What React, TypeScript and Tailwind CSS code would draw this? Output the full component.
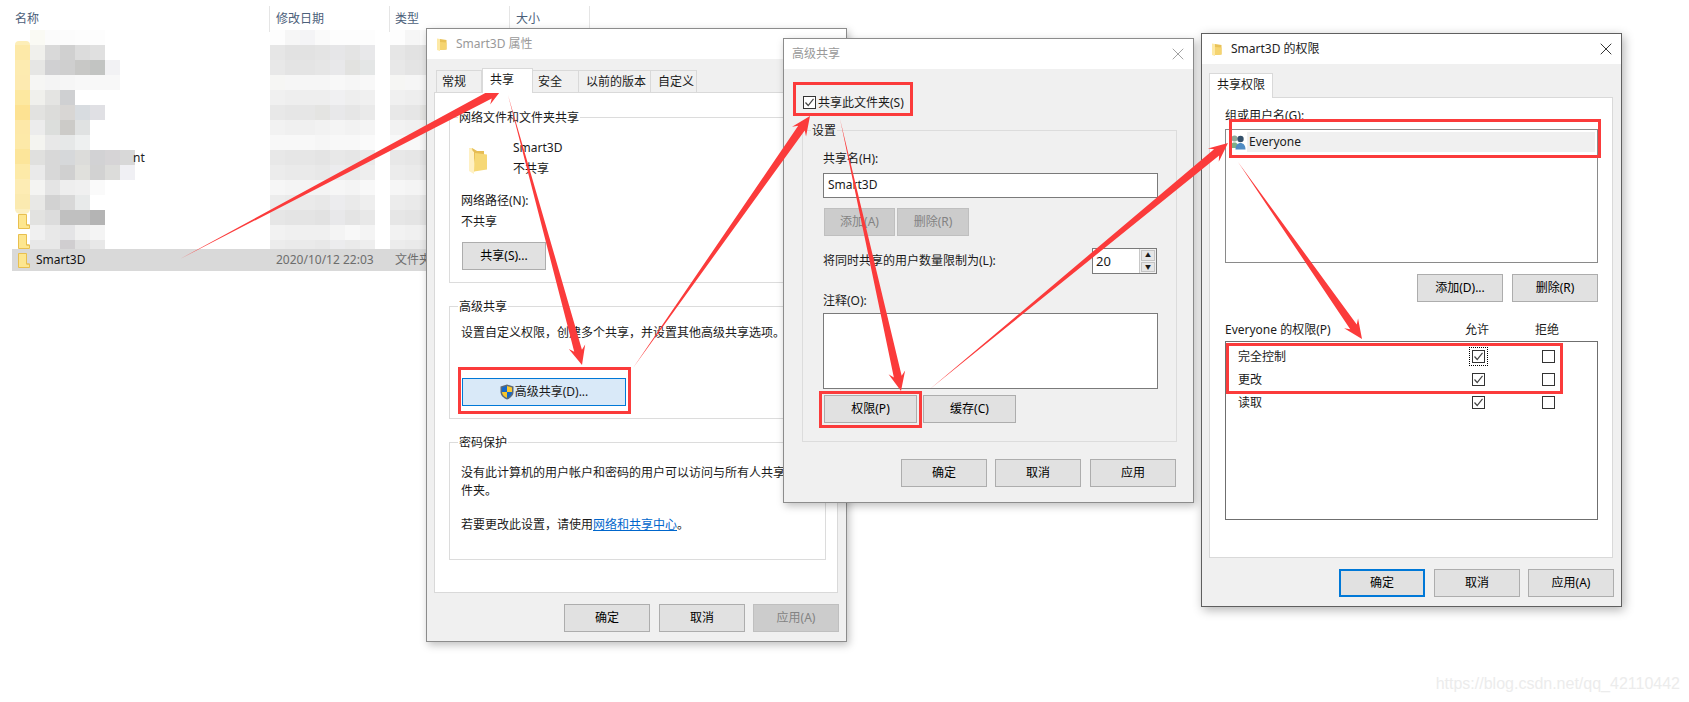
import React from 'react';
import { X } from 'lucide-react';

// mosaic cell colours, one row per 15px (blurred file list behind the dialogs)
const nameRows = [
  ['#fafaf4', '#fbfbfb', '#fcfcfc', '#fdfdfd', '#fdfdfd'],
  ['#f0f0ec', '#d9d9d9', '#d0d0d0', '#dcdcdc', '#e0e0e0'],
  ['#e6e6e4', '#d0d0d2', '#cfcfcf', '#c8c8c6', '#c2c4c2', '#f2f2f4'],
  ['#f6f6f4', '#f4f4f4', '#f6f6f6', '#f8f8f8', '#f8f8f8', '#f8f8f8'],
  ['#f0f0ec', '#e4e4e2', '#cfd0d2'],
  ['#e2e2e0', '#dcdcda', '#d8d6d4', '#d8dce0', '#e0e0e4'],
  ['#ececec', '#dcdedc', '#cccbc8', '#e0e2e2'],
  ['#f4f4f0', '#e8e8e8', '#e6e8e8', '#eef0f0'],
  ['#e0e0de', '#d8d8d8', '#d6d8da', '#dcdcda', '#d2d2d4', '#d6d4d6', '#d8d8d8'],
  ['#eaeaea', '#d8d8d8', '#d0d0d0', '#e0e0dc', '#d2d2d2', '#dcdcda', '#f0f0f4'],
  ['#f4f4f2', '#e4e4e4', '#eeeeee', '#f0f0f0', '#fafafa'],
  ['#e8e8e6', '#d2d2d2', '#d8d8d8', '#e8eaea'],
  ['#e2e2e0', '#dcdcdc', '#c0c0c0', '#c0c0c0', '#b4b4b4'],
  ['#f0f0f0', '#e8e8e8', '#e4e4e6', '#f0f0f0', '#f4f4f4'],
  ['#e8e8e8', '#e8e8e8', '#d0ced0', '#e0e0e0', '#e8e8e8'],
];

const dateRows = [
  ['#fdfdfd', '#f6f6f6', '#f4f4f6', '#fafafa', '#fdfdfd', '#fdfdfd', '#fdfdfd'],
  ['#e6e6e6', '#e2e2e2', '#e2e2e2', '#e4e4e4', '#e6e6e8', '#e4e4e4', '#e8e8ea'],
  ['#e8e8e8', '#e4e4e4', '#e4e4e4', '#e6e6e6', '#e8e8ea', '#e2e2e0', '#e4e6e6'],
  ['#f6f6f4', '#f6f6f6', '#f6f6f6', '#f6f6f6', '#f8f8f8', '#f6f6f6', '#f8f8f8'],
  ['#f0f0f0', '#eeeeee', '#eeeeee', '#eeeeee', '#f0f0f2', '#eeeeee', '#f0f0f0'],
  ['#e8e8e8', '#e6e6e6', '#e6e6e6', '#e4e4e2', '#e8e8ea', '#e6e6e6', '#eaeaea'],
  ['#f2f2f2', '#f0f0f0', '#f0f0f0', '#f2f2f2', '#f4f4f4', '#f2f2f2', '#f4f4f4'],
  ['#f8f8f8', '#f8f8f8', '#f8f8f8', '#f6f6f6', '#f8f8f8', '#f8f8f8', '#fafafa'],
  ['#e8e8e8', '#e6e6e6', '#e6e6e6', '#e4e4e4', '#e8e8e8', '#e6e6e6', '#eaeaea'],
  ['#ececec', '#eaeaea', '#eaeaea', '#e8e8e8', '#ececee', '#eaeaea', '#eeeeee'],
  ['#f6f6f6', '#f4f4f4', '#f4f4f4', '#f4f4f4', '#f6f6f6', '#f4f4f4', '#f8f8f8'],
  ['#ececec', '#eaeaea', '#eaeaea', '#e8e8e8', '#ececee', '#eaeaea', '#eeeeee'],
  ['#e6e6e6', '#e4e4e4', '#e4e4e4', '#e2e2e2', '#e8e8ea', '#e4e4e4', '#e8e8e8'],
  ['#f2f2f2', '#f0f0f0', '#f0f0f0', '#f0f0f0', '#f4f4f4', '#f8f8f8', '#f4f4f4'],
  ['#ececec', '#eaeaea', '#eaeaea', '#e8e8e8', '#ececee', '#eaeaea', '#eeeeee'],
];

const typeRows = dateRows.map((row) => row.slice(0, 2).concat(row[3]));

const stripColors = ['#fde9a8', '#fdebb0', '#fdeab0', '#fde8a0', '#fde292', '#fde8a8', '#fde9a8', '#fce59a', '#fdeaa8', '#fdecb4', '#fbeab0'];

function MosaicRows({ rows, extra }: { rows: string[][]; extra?: number }) {
  return (
    <div className="flex flex-col">
      {rows.map((row, i) => (
        <div key={i} className="flex h-[15px]">
          {row.map((color, j) => (
            <div key={j} className="w-[15px] h-[15px]" style={{ backgroundColor: color }} />
          ))}
          {extra === i && <span className="-ml-[2px] text-[12px] leading-[15px] text-[#222]">nt</span>}
        </div>
      ))}
    </div>
  );
}

function SmallFolder() {
  return (
    <svg width="12" height="15" viewBox="0 0 12 15" className="shrink-0">
      <path d="M0.5 0.5H8.5V11H11.5V14.5H0.5Z" fill="#fde68f" stroke="#e8bf4f" />
      <path d="M8.5 11H11.5" stroke="#e8bf4f" />
    </svg>
  );
}

function TitleFolder() {
  return (
    <svg width="10" height="13" viewBox="0 0 10 13" className="shrink-0">
      <path d="M3 1L9.5 2V11.5L3 12Z" fill="#e9c257" />
      <path d="M0 0.5L3 1V13L0 12Z" fill="#fde9a6" />
      <path d="M3 4L9.5 4.5V11.5L3 12Z" fill="#f5d470" />
    </svg>
  );
}

function BigFolder() {
  return (
    <svg width="20" height="27" viewBox="0 0 20 27" className="shrink-0">
      <path d="M1 1H4L9 4L9 22L6 25L1 22Z" fill="#fdedb6" />
      <path d="M4 1L9 4H16L16 22H8Z" fill="#e6bd55" />
      <path d="M7 6L19 7.5V22.5L6 24.5Z" fill="#f6d876" />
      <path d="M1 1V24L6 27V5Z" fill="#fff1c4" />
    </svg>
  );
}

function Shield() {
  return (
    <svg width="14" height="16" viewBox="0 0 14 16" className="shrink-0">
      <path d="M7 0.5L13.5 2.5V8C13.5 11.5 10 14.5 7 15.5C4 14.5 0.5 11.5 0.5 8V2.5Z" fill="#5d6a78" />
      <path d="M7 2L2 3.5V8H7Z" fill="#1668c8" />
      <path d="M7 2L12 3.5V8H7Z" fill="#fbc92e" />
      <path d="M2 8H7V14C4.5 13 2 11 2 8Z" fill="#f8c62a" />
      <path d="M12 8H7V14C9.5 13 12 11 12 8Z" fill="#1668c8" />
    </svg>
  );
}

function UsersIcon() {
  return (
    <svg width="16" height="16" viewBox="0 0 16 16" className="shrink-0">
      <circle cx="4.5" cy="4.5" r="3" fill="#8fa898" />
      <path d="M0 14C0 10 2 8.5 4.5 8.5C7 8.5 8 10 8 14Z" fill="#7fae86" />
      <circle cx="10.5" cy="5" r="3.2" fill="#34506a" />
      <path d="M5.5 15.5C5.5 11 8 9 10.5 9C13 9 15.5 11 15.5 15.5Z" fill="#4f8cc4" />
    </svg>
  );
}

function Btn({ className, primary, children }: { className?: string; primary?: boolean; children: React.ReactNode }) {
  return (
    <div className={`flex items-center justify-center h-[28px] bg-[#e1e1e1] text-black shrink-0 ${primary ? 'border-2 border-[#0078d7]' : 'border border-[#adadad]'} ${className ?? ''}`}>
      {children}
    </div>
  );
}

function OffBtn({ className, children }: { className?: string; children: React.ReactNode }) {
  return (
    <div className={`flex items-center justify-center h-[28px] border border-[#bfbfbf] bg-[#cccccc] text-[#838383] shrink-0 ${className ?? ''}`}>
      {children}
    </div>
  );
}

function Check({ on, focus }: { on?: boolean; focus?: boolean }) {
  return (
    <div className={`w-[13px] h-[13px] border border-[#333] bg-white flex items-center justify-center ${focus ? 'outline outline-1 outline-dotted outline-black outline-offset-[2px]' : ''}`}>
      {on && (
        <svg width="11" height="11" viewBox="0 0 11 11">
          <path d="M1.5 5.5L4.2 8.5L9.5 1.8" fill="none" stroke="#444" strokeWidth="1.2" />
        </svg>
      )}
    </div>
  );
}

function Group({ title, className, bg, children }: { title: string; className?: string; bg: string; children: React.ReactNode }) {
  return (
    <div className={`relative border ${className ?? ''}`}>
      <span className={`absolute -top-[9px] left-[8px] px-px leading-[18px] ${bg}`}>{title}</span>
      {children}
    </div>
  );
}

function TitleBar({ title, icon, active, closeDark }: { title: string; icon?: boolean; active?: boolean; closeDark?: boolean }) {
  return (
    <div className="flex items-center h-[30px] bg-white shrink-0">
      {icon && (
        <div className="ml-[10px] mr-[9px]">
          <TitleFolder />
        </div>
      )}
      <span className={`${icon ? '' : 'ml-[8px]'} ${active ? 'text-[#222]' : 'text-[#999]'}`}>{title}</span>
      {closeDark !== undefined && (
        <X className={`ml-auto mr-[5px] ${closeDark ? 'text-[#222]' : 'text-[#999]'}`} size={20} strokeWidth={1.1} />
      )}
    </div>
  );
}

function arrowPoints(x1: number, y1: number, x2: number, y2: number, shaft = 8, headLen = 19, headW = 17) {
  const len = Math.hypot(x2 - x1, y2 - y1);
  const ux = (x2 - x1) / len;
  const uy = (y2 - y1) / len;
  const nx = -uy;
  const ny = ux;
  const at = (back: number, side: number) => `${x2 - ux * back + nx * side},${y2 - uy * back + ny * side}`;
  return [`${x1},${y1}`, at(headLen * 0.78, shaft / 2), at(headLen, headW / 2), `${x2},${y2}`, at(headLen, -headW / 2), at(headLen * 0.78, -shaft / 2)].join(' ');
}

function PropertiesWindow() {
  return (
    <div className="absolute left-[426px] top-[28px] w-[421px] h-[614px] flex flex-col border border-[#8c8c8c] bg-[#f0f0f0] shadow-[2px_3px_8px_rgba(0,0,0,0.25)]">
      <TitleBar title="Smart3D 属性" icon />
      <div className="flex items-end h-[33px] pl-[9px]">
        <div className="w-[46px] h-[22px] pl-[5px] leading-[21px] border border-b-0 border-[#d9d9d9]">常规</div>
        <div className="w-[51px] h-[25px] relative z-10 -mb-px pl-[7px] pt-[1px] leading-[20px] bg-white border border-b-0 border-[#d9d9d9]">共享</div>
        <div className="w-[46px] h-[22px] pl-[5px] leading-[21px] border-t border-r border-[#d9d9d9]">安全</div>
        <div className="w-[72px] h-[22px] pl-[7px] leading-[21px] border-t border-r border-[#d9d9d9]">以前的版本</div>
        <div className="w-[46px] h-[22px] pl-[7px] leading-[21px] border-t border-r border-[#d9d9d9]">自定义</div>
      </div>
      <div className="ml-[7px] w-[404px] h-[501px] bg-white border border-[#d9d9d9] pl-[14px] pt-[24px]">
        <Group title="网络文件和文件夹共享" bg="bg-white" className="w-[377px] h-[166px] border-[#dcdcdc]">
          <div className="pl-[11px] pt-[19px]">
            <div className="flex">
              <div className="ml-[7px] mt-[10px] w-[45px]">
                <BigFolder />
              </div>
              <div className="leading-[21px]">
                <div>Smart3D</div>
                <div>不共享</div>
              </div>
            </div>
            <div className="mt-[11px] leading-[21px]">
              <div>网络路径(N):</div>
              <div>不共享</div>
            </div>
            <Btn className="mt-[10px] w-[84px] ml-px">共享(S)...</Btn>
          </div>
        </Group>
        <Group title="高级共享" bg="bg-white" className="mt-[23px] w-[377px] h-[113px] border-[#dcdcdc]">
          <div className="pl-[11px] pt-[15px]">
            <div className="leading-[21px]">设置自定义权限，创建多个共享，并设置其他高级共享选项。</div>
            <div className="mt-[35px] ml-px w-[164px] h-[28px] flex items-center justify-center gap-px border border-[#0078d7] bg-[#d9e9f8]">
              <Shield />
              <span>高级共享(D)...</span>
            </div>
          </div>
        </Group>
        <Group title="密码保护" bg="bg-white" className="mt-[23px] w-[377px] h-[118px] border-[#dcdcdc]">
          <div className="pl-[11px] pt-[21px] leading-[18px] whitespace-nowrap">
            <div>没有此计算机的用户帐户和密码的用户可以访问与所有人共享文</div>
            <div>件夹。</div>
            <div className="mt-[16px]">
              若要更改此设置，请使用<span className="text-[#0066cc] underline">网络和共享中心</span>。
            </div>
          </div>
        </Group>
      </div>
      <div className="flex mt-[11px] ml-[137px]">
        <Btn className="w-[86px]">确定</Btn>
        <Btn className="w-[86px] ml-[9px]">取消</Btn>
        <OffBtn className="w-[86px] ml-[8px]">应用(A)</OffBtn>
      </div>
    </div>
  );
}

function AdvancedWindow() {
  return (
    <div className="absolute left-[783px] top-[38px] w-[411px] h-[465px] flex flex-col border border-[#8c8c8c] bg-[#f0f0f0] shadow-[2px_3px_8px_rgba(0,0,0,0.25)]">
      <TitleBar title="高级共享" closeDark={false} />
      <div className="flex items-center gap-[2px] ml-[19px] mt-[27px] h-[13px]">
        <Check on />
        <span className="leading-[13px]">共享此文件夹(S)</span>
      </div>
      <Group title="设置" bg="bg-[#f0f0f0]" className="ml-[18px] mt-[21px] w-[375px] h-[312px] border-[#dcdcdc]">
        <div className="pl-[20px] pt-[17px] w-[355px]">
          <div className="leading-[21px]">共享名(H):</div>
          <div className="mt-[4px] h-[25px] border border-[#7a7a7a] bg-white pl-[4px] leading-[22px]">Smart3D</div>
          <div className="flex mt-[10px] gap-[2px] ml-px">
            <OffBtn className="w-[71px]">添加(A)</OffBtn>
            <OffBtn className="w-[72px]">删除(R)</OffBtn>
          </div>
          <div className="flex items-center justify-between mt-[12px] h-[26px] pr-px">
            <span>将同时共享的用户数量限制为(L):</span>
            <div className="flex w-[65px] h-[26px] border border-[#7a7a7a] bg-white">
              <span className="flex-1 pl-[3px] text-[13px] leading-[24px]">20</span>
              <div className="w-[17px] flex flex-col gap-px p-px bg-[#f0f0f0] border-l border-[#c8c8c8]">
                <div className="flex-1 flex items-center justify-center bg-[#e6e6e6] border border-[#c4c4c4] text-[6px] leading-none">▲</div>
                <div className="flex-1 flex items-center justify-center bg-[#e6e6e6] border border-[#c4c4c4] text-[6px] leading-none">▼</div>
              </div>
            </div>
          </div>
          <div className="mt-[16px] leading-[21px]">注释(O):</div>
          <div className="mt-[2px] h-[76px] border border-[#7a7a7a] bg-white" />
          <div className="flex mt-[6px] gap-[6px] ml-px">
            <Btn className="w-[93px]">权限(P)</Btn>
            <Btn className="w-[93px]">缓存(C)</Btn>
          </div>
        </div>
      </Group>
      <div className="flex mt-[17px] ml-[117px]">
        <Btn className="w-[86px]">确定</Btn>
        <Btn className="w-[86px] ml-[8px]">取消</Btn>
        <Btn className="w-[86px] ml-[9px]">应用</Btn>
      </div>
    </div>
  );
}

function PermissionsWindow() {
  const perms = [
    { label: '完全控制', focus: true },
    { label: '更改' },
    { label: '读取' },
  ];
  return (
    <div className="absolute left-[1201px] top-[33px] w-[421px] h-[574px] flex flex-col border border-[#5f5f5f] bg-[#f0f0f0] shadow-[2px_3px_10px_rgba(0,0,0,0.3)]">
      <TitleBar title="Smart3D 的权限" icon active closeDark />
      <div className="flex items-end h-[33px] pl-[7px]">
        <div className="w-[64px] h-[25px] relative z-10 -mb-px text-center leading-[22px] bg-white border border-b-0 border-[#d9d9d9]">共享权限</div>
      </div>
      <div className="ml-[7px] w-[404px] h-[461px] bg-white border border-[#d9d9d9] pl-[15px] pt-[7px]">
        <div className="leading-[21px]">组或用户名(G):</div>
        <div className="mt-[3px] w-[373px] h-[134px] border border-[#8a8a8a] p-[2px]">
          <div className="flex items-center h-[20px] bg-[#f0f0f0]">
            <div className="flex items-center h-[20px] w-[19px] pl-[2px] bg-white">
              <UsersIcon />
            </div>
            <span className="ml-[2px]">Everyone</span>
          </div>
        </div>
        <div className="flex mt-[11px] w-[373px] justify-end gap-[9px]">
          <Btn className="w-[86px]">添加(D)...</Btn>
          <Btn className="w-[86px]">删除(R)</Btn>
        </div>
        <div className="grid grid-cols-[217px_70px_70px] mt-[17px] leading-[21px]">
          <span>Everyone 的权限(P)</span>
          <span className="text-center">允许</span>
          <span className="text-center">拒绝</span>
        </div>
        <div className="mt-px w-[373px] h-[179px] border border-[#6f6f6f] pt-[3px]">
          {perms.map((p) => (
            <div key={p.label} className="grid grid-cols-[216px_70px_70px] items-center h-[23px]">
              <span className="pl-[12px]">{p.label}</span>
              <div className="flex justify-center pl-[3px]">
                <Check on focus={p.focus} />
              </div>
              <div className="flex justify-center pl-[3px]">
                <Check />
              </div>
            </div>
          ))}
        </div>
      </div>
      <div className="flex mt-[11px] ml-[137px]">
        <Btn className="w-[86px]" primary>确定</Btn>
        <Btn className="w-[86px] ml-[9px]">取消</Btn>
        <Btn className="w-[86px] ml-[8px]">应用(A)</Btn>
      </div>
    </div>
  );
}

export default function App() {
  return (
    <div className="relative w-[1689px] h-[702px] overflow-hidden bg-white text-[12px] text-[#1a1a1a] font-['Noto_Sans','Noto_Sans_CJK_SC',sans-serif]">
      {/* Explorer list behind the dialogs */}
      <div className="flex h-[30px] pt-[6px] items-start text-[#4c607a]">
        <div className="w-[270px] h-[26px] pl-[15px] leading-[26px] border-r border-[#e5e5e5]">名称</div>
        <div className="w-[120px] h-[26px] pl-[6px] leading-[26px] border-r border-[#e5e5e5]">修改日期</div>
        <div className="w-[120px] h-[26px] pl-[5px] leading-[26px] border-r border-[#e5e5e5]">类型</div>
        <div className="w-[80px] h-[26px] pl-[6px] leading-[26px] border-r border-[#e5e5e5]">大小</div>
      </div>
      <div className="flex h-[219px] overflow-hidden">
        <div className="w-[15px] ml-[15px] flex flex-col pt-[11px]">
          <div className="h-[4px] rounded-t-md bg-[#fdeeb8]" />
          {stripColors.map((c, i) => (
            <div key={i} className="h-[15px]" style={{ backgroundColor: c }} />
          ))}
          <div className="h-[5px] mt-0 rounded-b-md bg-[#fcefc0]" />
          <div className="ml-[3px]">
            <SmallFolder />
          </div>
          <div className="ml-[3px] mt-[5px]">
            <SmallFolder />
          </div>
        </div>
        <div className="w-[240px]">
          <MosaicRows rows={nameRows} extra={8} />
        </div>
        <div className="w-[120px]">
          <MosaicRows rows={dateRows} />
        </div>
        <MosaicRows rows={typeRows} />
      </div>
      <div className="flex items-center h-[22px] ml-[12px] w-[440px] bg-[#d9d9d9]">
        <div className="ml-[6px] w-[18px]">
          <SmallFolder />
        </div>
        <span className="text-[#111]">Smart3D</span>
        <span className="absolute left-[276px] text-[#6d6d6d]">2020/10/12 22:03</span>
        <span className="absolute left-[395px] text-[#6d6d6d]">文件夹</span>
      </div>

      <PropertiesWindow />
      <AdvancedWindow />
      <PermissionsWindow />

      {/* Red callouts drawn on top of the screenshot */}
      <div className="absolute left-[458px] top-[367px] w-[173px] h-[47px] border-[3px] border-[#fb3b3b]" />
      <div className="absolute left-[793px] top-[82px] w-[120px] h-[34px] border-[3px] border-[#fb3b3b]" />
      <div className="absolute left-[819px] top-[391px] w-[103px] h-[37px] border-[3px] border-[#fb3b3b]" />
      <div className="absolute left-[1229px] top-[119px] w-[372px] h-[39px] border-[3px] border-[#fb3b3b]" />
      <div className="absolute left-[1226px] top-[343px] w-[337px] h-[51px] border-[3px] border-[#fb3b3b]" />
      <svg className="absolute inset-0 pointer-events-none" width="1689" height="702" viewBox="0 0 1689 702">
        <g fill="#fb3b3b">
          <polygon points={arrowPoints(180, 259, 503, 88)} />
          <polygon points={arrowPoints(508, 95, 582, 365)} />
          <polygon points={arrowPoints(633, 368, 810, 116)} />
          <polygon points={arrowPoints(840, 119, 901, 391)} />
          <polygon points={arrowPoints(930, 389, 1228, 143)} />
          <polygon points={arrowPoints(1238, 162, 1362, 339)} />
        </g>
      </svg>

      <span className="absolute right-[9px] top-[674px] text-[16px] leading-[20px] text-[#ececec] font-['Liberation_Sans',sans-serif]">https://blog.csdn.net/qq_42110442</span>
    </div>
  );
}
